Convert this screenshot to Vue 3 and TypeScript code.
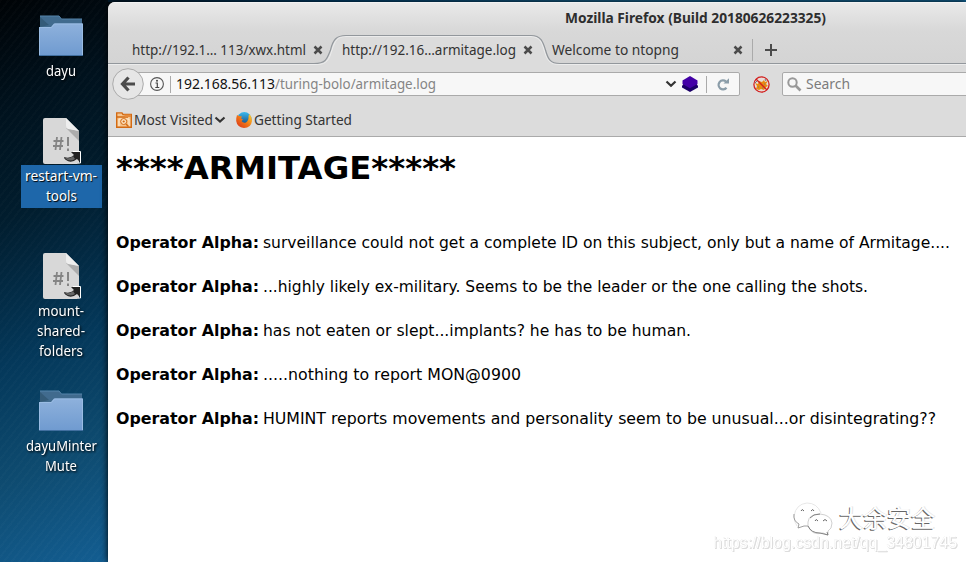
<script setup lang="ts">
import { h } from 'vue'

interface FitProps { text: string; w: number; spacing?: boolean }

// One line of text set to an exact width.
const FitText = (p: FitProps) =>
  h('svg', { width: p.w, height: 20, style: { width: p.w + 'px' } }, [
    h('text', { x: 0, y: 15, textLength: p.w, lengthAdjust: p.spacing ? 'spacing' : 'spacingAndGlyphs', fill: 'currentColor' }, p.text),
  ])
FitText.props = ['text', 'w', 'spacing']

interface Item { kind: 'folder' | 'script'; lines: FitProps[]; selected?: boolean; cls: string }
const items: Item[] = [
  { kind: 'folder', cls: 'first', lines: [{ text: 'dayu', w: 30 }] },
  { kind: 'script', cls: 'second', selected: true, lines: [{ text: 'restart-vm-', w: 72 }, { text: 'tools', w: 31 }] },
  { kind: 'script', cls: 'third', lines: [{ text: 'mount-', w: 46 }, { text: 'shared-', w: 48 }, { text: 'folders', w: 44 }] },
  { kind: 'folder', cls: 'fourth', lines: [{ text: 'dayuMinter', w: 71 }, { text: 'Mute', w: 32 }] },
]

const log: FitProps[] = [
  { text: 'surveillance could not get a complete ID on this subject, only but a name of Armitage....', w: 687 },
  { text: '...highly likely ex-military. Seems to be the leader or the one calling the shots.', w: 605 },
  { text: 'has not eaten or slept...implants? he has to be human.', w: 428 },
  { text: '.....nothing to report MON@0900', w: 258 },
  { text: 'HUMINT reports movements and personality seem to be unusual...or disintegrating??', w: 673 },
]
</script>

<template>
  <div class="desktop">
    <aside class="icons">
      <div v-for="it in items" :key="it.cls" class="item" :class="it.cls">
        <svg v-if="it.kind === 'folder'" class="pic" width="48" height="44" viewBox="0 0 48 44">
          <defs>
            <linearGradient id="fold" x1="0" y1="0" x2="0" y2="1">
              <stop offset="0" stop-color="#8eb1dc" /><stop offset="1" stop-color="#709bd0" />
            </linearGradient>
          </defs>
          <path d="M3 2H22L24.500 5H45V14H3Z" fill="#416b8e" />
          <path d="M3 2H22L24.500 5H45" fill="none" stroke="#5584aa" />
          <path d="M3 3L12 11L3 13Z" fill="#345b78" />
          <path d="M2 13H14L17 9.500H46V41H2Z" fill="url(#fold)" />
          <path d="M2.500 41V13.500H14.500L17.500 10H45.500V41" fill="none" stroke="#9abce3" />
          <path d="M2 41.500H46" stroke="#416f9f" />
        </svg>
        <svg v-else class="pic" width="48" height="48" viewBox="0 0 48 48">
          <path d="M8 1H29L42 14V45Q42 47 40 47H8Q6 47 6 45V3Q6 1 8 1Z" fill="#d8d8d8" />
          <path d="M29 11L42 14V24Z" fill="#adadad" />
          <path d="M29 1L42 14L31 12Q29 11 29 9Z" fill="#eee" />
          <g fill="none" stroke="#858585" stroke-width="1.800">
            <path d="M20 20L18.500 33M24.500 20L23 33M16.500 24H26.500M16 29H26" />
            <path d="M31 20V29M31 31.500V34" stroke-width="2" />
          </g>
          <path d="M36 34.500H43.500V46H41" fill="none" stroke="#fff" />
          <path d="M34 35H43V45L40 42Q34 47 29 43Q27 42 27 40Q33 42 37 38Z" fill="#222" />
          <path d="M27 40Q32 43 36 39L38 42Q32 46 27 40Z" fill="#666" />
        </svg>
        <div class="caption" :class="{ selected: it.selected }">
          <FitText v-for="l in it.lines" :key="l.text" class="fit" :text="l.text" :w="l.w" />
        </div>
      </div>
    </aside>

    <main class="window">
      <header class="title"><FitText class="fit bold" text="Mozilla Firefox (Build 20180626223325)" :w="261" /></header>
      <nav class="tabs">
        <svg class="tabline" width="858" height="33" viewBox="0 0 858 33">
          <path d="M206 31.500C218 31.500 219 27 222.500 18C225 8 228 3.500 238 3.500H423C433 3.500 435 10 437.500 18C440 27 442 31.500 452 31.500V33H206Z" fill="#dcdcdc" />
          <path d="M0 32.500H208C219 32.500 221 28 224 18C227 9 229 4.500 238 4.500H423C431 4.500 434 10 436 18C439 28 441 32.500 452 32.500H858" fill="none" stroke="#ececec" />
          <path d="M0 31.500H206C218 31.500 219 27 222.500 18C225 8 228 3.500 238 3.500H423C433 3.500 435 10 437.500 18C440 27 442 31.500 452 31.500H858" fill="none" stroke="#92979c" stroke-width="1.200" />
        </svg>
        <div class="tab t1"><FitText class="fit" text="http://192.1… 113/xwx.html" :w="174" /><svg class="x" width="10" height="10"><path d="M1.500 1.500L8.500 8.500M8.500 1.500L1.500 8.500" /></svg></div>
        <div class="tab t2"><FitText class="fit" text="http://192.16…armitage.log" :w="174" /><svg class="x" width="10" height="10"><path d="M1.500 1.500L8.500 8.500M8.500 1.500L1.500 8.500" /></svg></div>
        <div class="tab t3"><FitText class="fit" text="Welcome to ntopng" :w="127" /><svg class="x" width="10" height="10"><path d="M1.500 1.500L8.500 8.500M8.500 1.500L1.500 8.500" /></svg></div>
        <svg class="plus" width="12" height="12"><path d="M6 0V12M0 6H12" stroke="#4b4b4b" stroke-width="2" /></svg>
      </nav>

      <div class="bar">
        <svg class="back" width="32" height="32" viewBox="0 0 32 32">
          <circle cx="16" cy="16" r="15.300" fill="#e6e6e6" stroke="#aaa" />
          <path d="M16.500 9.500L10.500 16L16.500 22.500M11 16H23" fill="none" stroke="#4b4b4b" stroke-width="3.200" />
        </svg>
        <div class="url">
          <svg width="14" height="14" viewBox="0 0 14 14"><circle cx="7" cy="7" r="6.400" fill="none" stroke="#555" stroke-width="1.100" /><path d="M5.500 6H7.300V10.500M5.300 10.500H9.300" fill="none" stroke="#444" stroke-width="1.200" /><circle cx="7" cy="3.800" r="1" fill="#444" /></svg>
          <i class="sep info" />
          <FitText class="fit host" text="192.168.56.113" :w="99" />
          <FitText class="fit path" text="/turing-bolo/armitage.log" :w="161" />
          <svg class="drop" width="12" height="8"><path d="M1.500 1.500L6 5.800L10.500 1.500" fill="none" stroke="#333" stroke-width="2.200" /></svg>
          <svg class="cube" width="16" height="16" viewBox="0 0 16 16"><path d="M0 10L2 7H14L16 10V11.500L8 16L0 11.500Z" fill="#1c0068" /><path d="M8 0L15.500 4.500V8L8 12.300L.5 8V4.500Z" fill="#4300a6" /></svg>
          <i class="sep" />
          <svg class="reload" width="13" height="13" viewBox="0 0 13 13"><path d="M9.500 9.800A4.500 4.500 0 1 1 9 3.500" fill="none" stroke="#8b9da9" stroke-width="2.200" /><path d="M6.500 5.500H12V.2Z" fill="#8b9da9" /></svg>
        </div>
        <svg class="noscript" width="17" height="17" viewBox="0 0 17 17">
          <circle cx="8.500" cy="8.500" r="7.500" fill="#e9dcd8" />
          <path d="M4 10L3 13L6 14L8 13L11 14L13 11L15 10L13 8L15 5L12 6L11 4L9 6L6 5L5 8L2 7Z" fill="#e98b12" />
          <path d="M2 7L4 5M12 3L13 5M5 11H6M9 12H10M11 8H12" stroke="#72777a" />
          <circle cx="8.500" cy="8.500" r="7.600" fill="none" stroke="#d2201f" stroke-width="1.300" /><path d="M3 3L14 14" stroke="#d2201f" stroke-width="1.300" />
        </svg>
        <div class="search">
          <svg width="15" height="15" viewBox="0 0 15 15"><circle cx="5.500" cy="5.500" r="4.200" fill="none" stroke="#999" stroke-width="2" /><path d="M8.500 8.500L13.500 13.500" stroke="#999" stroke-width="2.600" /></svg>
          <FitText class="fit" text="Search" :w="44" />
        </div>
      </div>

      <div class="bookmarks">
        <svg width="16" height="16" viewBox="0 0 16 16"><path d="M.7 .9H6L7 2.500H15.300V15.200H.7Z" fill="#f6c58f" stroke="#d36a13" stroke-width="1.400" /><path d="M1 5H12" stroke="#d36a13" stroke-width="1.300" /><path d="M8 2.500H15V5H9Z" fill="#e48a3c" /><path d="M3 14V7H13V14" fill="none" stroke="#fff0d8" /><circle cx="7.700" cy="9.500" r="3" fill="#fbe3c3" stroke="#d36a13" /><circle cx="7.700" cy="9.500" r="1.100" fill="#d36a13" /><path d="M10 12L12.500 14.500" stroke="#d36a13" stroke-width="1.400" /></svg>
        <FitText class="fit most" text="Most Visited" :w="79" />
        <svg class="drop2" width="12" height="8"><path d="M1.500 1.500L6 5.500L10.500 1.500" fill="none" stroke="#333" stroke-width="2.200" /></svg>
        <svg class="fox" width="16" height="16" viewBox="0 0 16 16">
          <defs>
            <linearGradient id="fx" x1="0" y1="1" x2="1" y2="0"><stop offset="0" stop-color="#d92d18" /><stop offset=".5" stop-color="#f07818" /><stop offset="1" stop-color="#ffd52c" /></linearGradient>
            <linearGradient id="gl" x1="0" y1="0" x2="0" y2="1"><stop offset="0" stop-color="#3bb9ed" /><stop offset="1" stop-color="#123c75" /></linearGradient>
          </defs>
          <circle cx="8.300" cy="7.300" r="7.200" fill="url(#gl)" />
          <path d="M1 3L3 4L6 4.500L5 6.500L7 7.500L5.500 9Q7 11.500 10 10.500Q13 8 12.500 4L13.500 2Q16 5 16 9Q15 16 8 16Q1 15 .2 9Q0 6 1 3Z" fill="url(#fx)" />
        </svg>
        <FitText class="fit started" text="Getting Started" :w="98" />
      </div>

      <article class="page">
        <h1><FitText class="fit" text="****ARMITAGE*****" :w="340" spacing /></h1>
        <p v-for="l in log" :key="l.text"><b><FitText class="fit" text="Operator Alpha:" :w="143" spacing /></b><FitText class="fit" :text="l.text" :w="l.w" spacing /></p>
      </article>
    </main>

    <div class="mark">
      <div class="brand">
        <svg width="40" height="34" viewBox="0 0 40 34" fill="#fff">
          <path d="M4 24Q1 20 1 14Q3 2 14 1Q24 1 28 11" fill="none" stroke="#ddd" stroke-width=".7" />
          <path d="M1 12Q0 19 6 22L5 26L11 24Q14 24 16 24" fill="none" stroke="#888" stroke-width=".8" />
          <path d="M15 20Q16 12 27 12Q38 13 39 21Q39 27 35 29V33L30 31Q19 34 15 24Z" stroke="#bbb" stroke-width=".7" />
          <path d="M15 24Q18 31 27 31L35 33L34 30M17 16Q20 12 27 12" fill="none" stroke="#777" stroke-width=".9" />
          <path d="M8 9Q9 6 11 9M18 9Q20 6 21 9M22 19Q23 16 25 19M30 19Q32 16 34 19" fill="none" stroke="#666" />
        </svg>
        <span>大余安全</span>
      </div>
      <svg class="blog" width="246" height="20"><text x="0" y="15" textLength="244" lengthAdjust="spacingAndGlyphs">https://blog.csdn.net/qq_34801745</text></svg>
    </div>
  </div>
</template>

<style>
body { overflow: hidden; }
</style>
<style scoped>
* { box-sizing: border-box; }
svg { display: block; flex: none; }
.desktop {
  position: relative; width: 966px; height: 562px; display: flex; overflow: hidden;
  font: 14.7px "Noto Sans", "Open Sans", sans-serif; color: #333;
  background:
    linear-gradient(90deg, transparent 108px, #00182b 108px, #02426f 340px, #17608a 600px, #126596 966px) top / 966px 2px no-repeat,
    repeating-linear-gradient(128deg, rgba(255,255,255,.014) 0 2px, transparent 2px 6px),
    linear-gradient(158deg, #000306 0, #00121e 105px, #011d2e 205px, #04385a 340px, #0e4b70 450px, #14629a 590px);
}
.fit { overflow: visible; }
.bold { font-weight: 700; }
.icons { width: 108px; flex: none; padding: 14px 0 0 15px; display: flex; flex-direction: column; }
.item { width: 92px; display: flex; flex-direction: column; align-items: center; }
.first { height: 103px; }
.second { height: 135px; }
.third { height: 137px; }
.caption { display: flex; flex-direction: column; align-items: center; color: #fff; filter: drop-shadow(1px 1px 1px #000); }
.first .caption { margin-top: 3px; }
.fourth .caption { margin-top: 3px; }
.third .caption { margin-top: 1px; }
.selected { width: 81px; height: 43px; padding-top: 1px; background: #1e67aa; filter: none; text-shadow: 1px 1px 1px #000; }
.window {
  flex: 1; margin-top: 2px; height: 560px; display: flex; flex-direction: column;
  border-radius: 7px 0 0 0; background: #dcdcdc; overflow: hidden; box-shadow: 0 0 7px #000;
}
.title { height: 29px; padding: 5px 0 0 457px; background: linear-gradient(#e9e9e9, #d8d8d8); color: #2e2e2e; border-top: 1px solid #f2f2f2; }
.tabs { height: 32px; position: relative; display: flex; background: linear-gradient(#d8d8d8, #d4d4d4); color: #333; }
.tabline { position: absolute; left: 0; top: 1px; }
.tab { position: relative; height: 20px; margin-top: 9px; display: flex; align-items: center; }
.t1 { margin-left: 24px; width: 210px; }
.t2 { width: 210px; }
.t3 { width: 201px; }
.x { margin-left: 7px; stroke: #4b4b4b; stroke-width: 2.500; }
.t3 .x { margin-left: 54px; }
.plus { margin: 13px 0 0 12px; }
.t3::after { content: ""; position: absolute; right: 0; top: -1px; width: 1px; height: 22px; background: #aaa; }
.bar { height: 40px; padding-left: 4px; display: flex; align-items: center; margin-top: 1px; }
.back { position: relative; z-index: 1; }
.url { width: 612px; height: 24px; margin-left: -16px; padding-left: 21px; display: flex; align-items: center; background: #f7f7f7; border: 1px solid #aaa; border-radius: 2px; }
.sep { width: 1px; height: 17px; background: #aaa; }
.info { margin: 0 5px 0 6px; }
.host { color: #111; }
.path { color: #858585; }
.drop { margin-left: 229px; }
.cube { margin: 0 8px 0 5px; }
.reload { margin-left: 10px; }
.noscript { margin-left: 13px; }
.search { flex: 1; height: 24px; margin: 0 -5px 0 12px; padding-left: 4px; display: flex; align-items: center; gap: 4px; background: #f7f7f7; border: 1px solid #aaa; border-radius: 2px; color: #7c7c7c; }
.bookmarks { height: 33px; padding-left: 8px; display: flex; align-items: center; border-bottom: 1px solid #aaa; }
.most { margin-left: 2px; }
.drop2 { margin-left: 1px; }
.fox { margin: 0 2px 0 10px; }
.page { flex: 1; background: #fff; padding: 27px 8px 0; font: 16px/20px "DejaVu Sans", sans-serif; color: #000; white-space: nowrap; }
h1 { margin: 0 0 49px; height: 20px; font-size: 32px; }
p { margin: 0 0 24px; display: flex; gap: 4px; }
.mark { position: absolute; left: 713px; top: 502px; width: 246px; }
.brand { display: flex; height: 34px; padding-left: 80px; gap: 6px; font: 24px/30px "Noto Sans CJK SC", sans-serif; color: #fff; text-shadow: -1px 1px 0 #666, 1px 0 0 #e4e4e4; }
.blog { font: 16px "Liberation Sans", sans-serif; fill: #fff; filter: drop-shadow(1px 1px 0 #ddd) drop-shadow(0 0 .5px #ddd); margin-top: -3px; overflow: visible; }
</style>
